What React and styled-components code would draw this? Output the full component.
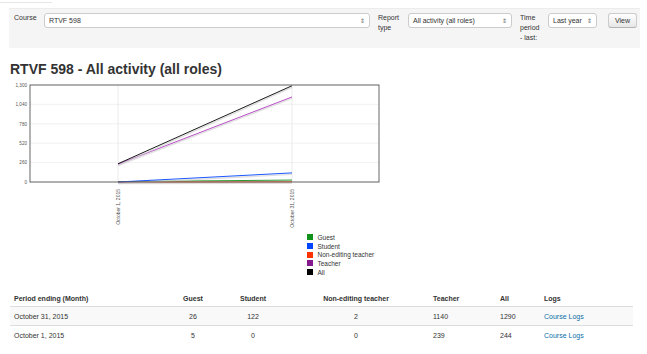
import React from "react";
import styled, { createGlobalStyle } from "styled-components";

const GlobalStyle = createGlobalStyle`
  body {
    margin: 0;
    background: #fff;
    color: #333;
    font-family: "Liberation Sans", Arial, sans-serif;
  }
`;

const Page = styled.div`
  width: 647px;
  height: 354px;
  overflow: hidden;
  padding-top: 2px;
  box-sizing: border-box;
`;

const TopLine = styled.div`
  width: 52px;
  height: 1px;
  background: #e6e6e6;
`;

const FilterBar = styled.form`
  margin: 5px 0 0 9px;
  width: 631px;
  height: 40px;
  box-sizing: border-box;
  background: #f5f5f5;
  border-top: 1px solid #ececec;
  display: flex;
  align-items: flex-start;
  padding: 4px 0 0 5px;
`;

const Label = styled.label`
  width: ${(p) => p.$w}px;
  margin-right: ${(p) => p.$gap || 8}px;
  font-size: 7px;
  line-height: 10px;
  color: #333;
`;

const Select = styled.div`
  width: ${(p) => p.$w}px;
  height: 15px;
  box-sizing: border-box;
  margin-right: ${(p) => p.$gap || 8}px;
  background: #fff;
  border: 1px solid #ccc;
  border-radius: 3px;
  display: flex;
  align-items: center;
  justify-content: space-between;
  padding: 0 4px 0 4px;
  font-size: 7px;
  color: #333;
`;

const Arrows = styled.span`
  font-size: 6px;
  color: #666;
  line-height: 1;
`;

const ViewButton = styled.button`
  width: 29px;
  height: 15px;
  padding: 0;
  font-family: inherit;
  font-size: 7px;
  color: #333;
  background: linear-gradient(#fff, #e6e6e6);
  border: 1px solid #ccc;
  border-bottom-color: #b3b3b3;
  border-radius: 3px;
`;

const Title = styled.h2`
  margin: 11px 0 0 10px;
  font-size: 14px;
  line-height: 20px;
  font-weight: bold;
  color: #333;
`;

const ChartSvg = styled.svg`
  display: block;
  margin-top: 3px;
`;

const Legend = styled.ul`
  list-style: none;
  margin: 5px 0 0 307px;
  padding: 0;
`;

const LegendItem = styled.li`
  display: flex;
  align-items: center;
  height: 8.7px;
  font-size: 6.5px;
  color: #333;
  &::before {
    content: "";
    width: 5.5px;
    height: 6px;
    margin-right: 5px;
    background: ${(p) => p.$color};
  }
`;

const Table = styled.table`
  margin: 14px 0 0 10px;
  width: 623px;
  border-collapse: collapse;
  table-layout: fixed;
  font-size: 7px;
  color: #333;
`;

const Th = styled.th`
  text-align: ${(p) => (p.$center ? "center" : "left")};
  font-weight: bold;
  height: 16px;
  padding: 0 4px;
  vertical-align: middle;
`;

const Row = styled.tr`
  background: ${(p) => (p.$striped ? "#f9f9f9" : "#fff")};
  border-top: 1px solid #ddd;
`;

const Td = styled.td`
  text-align: ${(p) => (p.$center ? "center" : "left")};
  height: 18px;
  padding: 0 4px;
`;

const Link = styled.a`
  color: #0b6fa8;
  text-decoration: none;
`;

const roles = [
  { name: "Guest", color: "#10911a" },
  { name: "Student", color: "#0044ff" },
  { name: "Non-editing teacher", color: "#ff3300" },
  { name: "Teacher", color: "#85188c" },
  { name: "All", color: "#000" },
];

const rows = [
  { period: "October 31, 2015", values: [26, 122, 2, 1140, 1290] },
  { period: "October 1, 2015", values: [5, 0, 0, 239, 244] },
];

const X0 = 30;
const X1 = 379;
const Y0 = 3;
const Y1 = 100;
const px = [118, 292];
const yOf = (v) => Y1 - (v / 1300) * (Y1 - Y0);

const Chart = () => {
  const ticks = [0, 260, 520, 780, 1040, 1300];
  const order = [0, 2, 1, 3, 4];
  return (
    <ChartSvg width="390" height="146" viewBox="0 0 390 146">
      <rect x={X0} y={Y0} width={X1 - X0} height={Y1 - Y0} fill="#fff" />
      {ticks.map((t) => (
        <g key={t}>
          <line x1={X0} x2={X1} y1={yOf(t)} y2={yOf(t)} stroke="#eee" strokeWidth="0.8" />
          <text
            x={27}
            y={yOf(t) + 1.8}
            fontSize="4.6"
            textAnchor="end"
            fill="#555"
            fontFamily="Liberation Sans, Arial, sans-serif"
          >
            {t.toLocaleString("en-US")}
          </text>
        </g>
      ))}
      {px.map((x) => (
        <line key={x} x1={x} x2={x} y1={Y0} y2={Y1} stroke="#e6e6e6" strokeWidth="0.8" />
      ))}
      {order.map((i) => {
        const a = rows[1].values[i];
        const b = rows[0].values[i];
        return (
          <g key={i}>
            <line
              x1={px[0]}
              y1={yOf(a) + 1.5}
              x2={px[1]}
              y2={yOf(b) + 1.5}
              stroke="#ccc"
              strokeOpacity="0.6"
              strokeWidth="1.4"
            />
            <line
              x1={px[0]}
              y1={yOf(a)}
              x2={px[1]}
              y2={yOf(b)}
              stroke={i === 3 ? "#b03cc0" : roles[i].color}
              strokeWidth="0.9"
            />
          </g>
        );
      })}
      <rect
        x={X0}
        y={Y0}
        width={X1 - X0}
        height={Y1 - Y0}
        fill="none"
        stroke="#666"
        strokeWidth="1"
      />
      {[
        ["October 1, 2015", px[0]],
        ["October 31, 2015", px[1]],
      ].map(([label, x]) => (
        <text
          key={label}
          transform={`translate(${x + 1.7},${Y1 + 7}) rotate(-90)`}
          textAnchor="end"
          fontSize="5"
          fill="#555"
          fontFamily="Liberation Sans, Arial, sans-serif"
        >
          {label}
        </text>
      ))}
    </ChartSvg>
  );
};

export default function App() {
  return (
    <>
      <GlobalStyle />
      <Page>
        <TopLine />
        <FilterBar>
          <Label $w={22}>Course</Label>
          <Select $w={326}>
            <span>RTVF 598</span>
            <Arrows>⇕</Arrows>
          </Select>
          <Label $w={22}>
            Report
            <br />
            type
          </Label>
          <Select $w={104}>
            <span>All activity (all roles)</span>
            <Arrows>⇕</Arrows>
          </Select>
          <Label $w={20}>
            Time
            <br />
            period
            <br />- last:
          </Label>
          <Select $w={49} $gap={11}>
            <span>Last year</span>
            <Arrows>⇕</Arrows>
          </Select>
          <ViewButton type="button">View</ViewButton>
        </FilterBar>
        <Title>RTVF 598 - All activity (all roles)</Title>
        <Chart />
        <Legend>
          {roles.map((r) => (
            <LegendItem key={r.name} $color={r.color}>
              {r.name}
            </LegendItem>
          ))}
        </Legend>
        <Table>
          <colgroup>
            <col style={{ width: 153 }} />
            <col style={{ width: 60 }} />
            <col style={{ width: 60 }} />
            <col style={{ width: 146 }} />
            <col style={{ width: 67 }} />
            <col style={{ width: 44 }} />
            <col style={{ width: 93 }} />
          </colgroup>
          <thead>
            <tr>
              <Th>Period ending (Month)</Th>
              <Th $center>Guest</Th>
              <Th $center>Student</Th>
              <Th $center>Non-editing teacher</Th>
              <Th>Teacher</Th>
              <Th>All</Th>
              <Th>Logs</Th>
            </tr>
          </thead>
          <tbody>
            {rows.map((r, idx) => (
              <Row key={r.period} $striped={idx === 0}>
                <Td>{r.period}</Td>
                {r.values.map((v, i) => (
                  <Td key={i} $center={i < 3}>
                    {v}
                  </Td>
                ))}
                <Td>
                  <Link href="#">Course Logs</Link>
                </Td>
              </Row>
            ))}
          </tbody>
        </Table>
      </Page>
    </>
  );
}
